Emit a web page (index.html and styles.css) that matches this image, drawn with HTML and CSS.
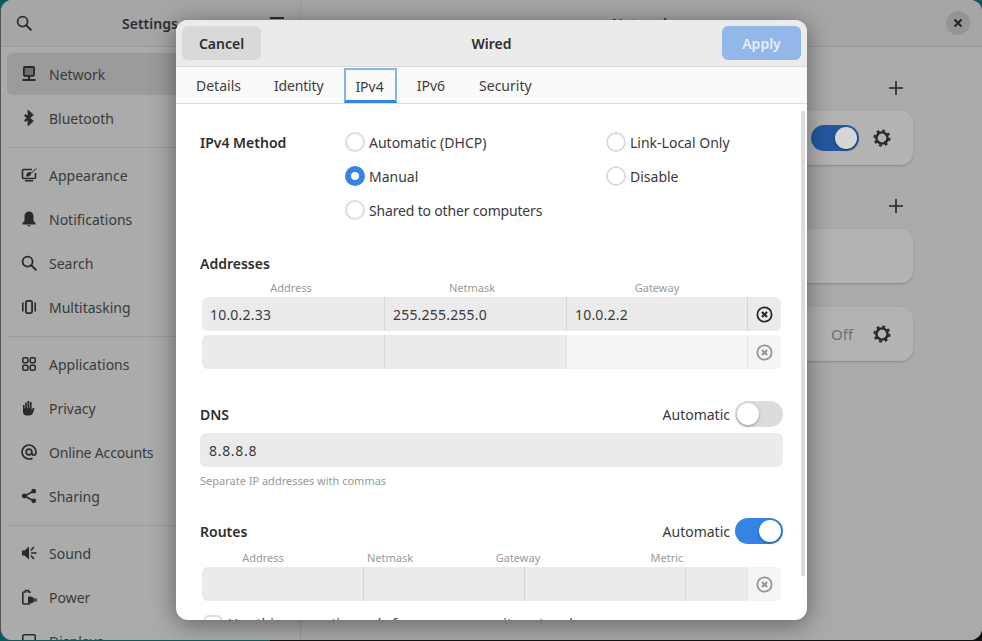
FILE: index.html
```html
<!DOCTYPE html>
<html lang="en">
<head>
    <meta charset="UTF-8">
    <meta name="viewport" content="width=device-width, initial-scale=1.0">
    <title>Settings - Network</title>
    <link rel="stylesheet" href="styles.css">
</head>
<body>
    <div class="window">
        <aside class="sidebar">
            <header class="side-head">
                <svg class="icon search-btn" viewBox="0 0 16 16"><circle cx="6.6" cy="6.6" r="5" fill="none" stroke="currentColor" stroke-width="1.8"/><path d="M10.4 10.4l4.4 4.4" stroke="currentColor" stroke-width="2" stroke-linecap="round"/></svg>
                <div class="side-title">Settings</div>
                <div class="burger"><span></span><span></span><span></span></div>
            </header>
            <nav class="side-nav">
                <a class="side-item selected">
                    <svg class="icon" viewBox="0 0 16 16"><rect x="2.900" y="1" width="10.200" height="8.800" rx="1" fill="#6e6e6e" stroke="currentColor" stroke-width="1.800"/><path d="M7 10h2v3H7zM1.500 13h13v2h-13z" fill="currentColor"/></svg>
                    Network
                </a>
                <a class="side-item">
                    <svg class="icon" viewBox="0 0 16 16"><path d="M3.800 4.800l7.200 6.300-3.200 3V1.900l3.200 3-7.200 6.300" fill="none" stroke="currentColor" stroke-width="2.400"/></svg>
                    Bluetooth
                </a>
                <div class="side-sep"></div>
                <a class="side-item">
                    <svg class="icon" viewBox="0 0 16 16"><path d="M11 2.500H2.500a1 1 0 0 0-1 1v7a1 1 0 0 0 1 1h11a1 1 0 0 0 1-1V6" fill="none" stroke="currentColor" stroke-width="1.600"/><path d="M15.500 1L10 5.500 8.500 5C6.500 5 5.500 6.500 5 9.500c2.500.3 5-.5 5-3l5.500-4.500zM4 13h8v1.600H4z" fill="currentColor"/></svg>
                    Appearance
                </a>
                <a class="side-item">
                    <svg class="icon" viewBox="0 0 16 16"><path d="M8 .5C5.200.5 3.500 2.800 3.500 5.500V9c0 1.500-1.200 2-2 3v1.500h13V12c-.8-1-2-1.500-2-3V5.500C12.500 2.800 10.800.5 8 .5zM6 14.200h4L8 15.800z" fill="currentColor"/></svg>
                    Notifications
                </a>
                <a class="side-item">
                    <svg class="icon" viewBox="0 0 16 16"><circle cx="6.600" cy="6.600" r="5" fill="none" stroke="currentColor" stroke-width="1.800"/><path d="M10.400 10.400l4.400 4.400" stroke="currentColor" stroke-width="2" stroke-linecap="round"/></svg>
                    Search
                </a>
                <a class="side-item">
                    <svg class="icon" viewBox="0 0 16 16"><rect x="4.900" y="1.900" width="6.200" height="12.200" rx="1.500" fill="none" stroke="currentColor" stroke-width="1.800"/><path d="M1 3.500h1.600v9H1zM13.400 3.500H15v9h-1.600z" fill="currentColor"/></svg>
                    Multitasking
                </a>
                <div class="side-sep"></div>
                <a class="side-item">
                    <svg class="icon" viewBox="0 0 16 16"><g fill="none" stroke="currentColor" stroke-width="1.600"><rect x="1.800" y="1.800" width="5" height="5" rx="1.200"/><rect x="9.200" y="1.800" width="5" height="5" rx="1.200"/><rect x="1.800" y="9.200" width="5" height="5" rx="1.200"/><rect x="9.200" y="9.200" width="5" height="5" rx="1.200"/></g></svg>
                    Applications
                </a>
                <a class="side-item">
                    <svg class="icon" viewBox="0 0 16 16"><path d="M2 5h1.600v3h.6V2.500h1.700V8h.6V1h1.800v7h.6V2h1.700v7.500l1.500-1.500c.7-.5 1.500 0 1.300.8L12 13c-.7 1.500-2 2.500-4 2.500H5.500C3.500 15.500 2 14 2 12z" fill="currentColor"/></svg>
                    Privacy
                </a>
                <a class="side-item tight">
                    <svg class="icon" viewBox="0 0 16 16"><path d="M11.500 14.200C10.500 14.800 9.300 15 8 15a7 7 0 1 1 7-7c0 2-1 3.200-2.300 3.200S10.800 10 10.800 8.500" fill="none" stroke="currentColor" stroke-width="1.700"/><circle cx="8" cy="8" r="2.800" fill="none" stroke="currentColor" stroke-width="1.700"/></svg>
                    Online Accounts
                </a>
                <a class="side-item">
                    <svg class="icon" viewBox="0 0 16 16"><path d="M12.500 3.200L3.500 8l9 4.800" fill="none" stroke="currentColor" stroke-width="1.700"/><circle cx="12.700" cy="3.200" r="2.400" fill="currentColor"/><circle cx="3.300" cy="8" r="2.400" fill="currentColor"/><circle cx="12.700" cy="12.800" r="2.400" fill="currentColor"/></svg>
                    Sharing
                </a>
                <div class="side-sep"></div>
                <a class="side-item">
                    <svg class="icon" viewBox="0 0 16 16"><path d="M1 5.500h2.500L8 1.500v13l-4.500-4H1z" fill="currentColor"/><path d="M10 8h5.500M9.800 5.500l3.200-3.500M9.800 10.500l3.200 3.500" stroke="currentColor" stroke-width="1.600"/></svg>
                    Sound
                </a>
                <a class="side-item">
                    <svg class="icon" viewBox="0 0 16 16"><path d="M9 4V3H7.500V1.500h-3V3H2.800a1 1 0 0 0-1 1v10a1 1 0 0 0 1 1h6" fill="none" stroke="currentColor" stroke-width="1.600"/><path d="M7 7.500h3a3 3 0 0 1 2.800 2H16v1.200h-3.200v.600H16v1.200h-3.200a3 3 0 0 1-2.800 2H7z" fill="currentColor"/></svg>
                    Power
                </a>
                <a class="side-item">
                    <svg class="icon" viewBox="0 0 16 16"><rect x="1.800" y="1.800" width="12.400" height="9.400" rx="1.500" fill="none" stroke="currentColor" stroke-width="1.600"/></svg>
                    Displays
                </a>
            </nav>
        </aside>

        <main class="main">
            <header class="main-head">
                <div class="main-title">Network</div>
                <button class="close-btn">
                    <svg viewBox="0 0 16 16" width="16" height="16"><path d="M4.500 4.500l7 7M11.500 4.500l-7 7" stroke="currentColor" stroke-width="2.200"/></svg>
                </button>
            </header>
            <div class="main-body">
                <div class="group-head">
                    <svg class="plus" viewBox="0 0 16 16"><path d="M8 1v14M1 8h14" stroke="currentColor" stroke-width="1.600"/></svg>
                </div>
                <div class="card">
                    <span class="switch dim-on"><span class="knob"></span></span>
                    <svg class="gear" viewBox="0 0 16 16"><circle cx="8" cy="8" r="5" fill="none" stroke="currentColor" stroke-width="2.200"/><circle cx="8" cy="8" r="6.700" fill="none" stroke="currentColor" stroke-width="1.800" stroke-dasharray="2.600 2.660"/></svg>
                </div>
                <div class="group-head second">
                    <svg class="plus" viewBox="0 0 16 16"><path d="M8 1v14M1 8h14" stroke="currentColor" stroke-width="1.600"/></svg>
                </div>
                <div class="card"></div>
                <div class="card third">
                    <span class="off-label">Off</span>
                    <svg class="gear" viewBox="0 0 16 16"><circle cx="8" cy="8" r="5" fill="none" stroke="currentColor" stroke-width="2.200"/><circle cx="8" cy="8" r="6.700" fill="none" stroke="currentColor" stroke-width="1.800" stroke-dasharray="2.600 2.660"/></svg>
                </div>
            </div>
        </main>

        <div class="dialog">
            <header class="dlg-head">
                <button class="btn cancel">Cancel</button>
                <div class="dlg-title">Wired</div>
                <button class="btn apply">Apply</button>
            </header>
            <ul class="tabs">
                <li>Details</li>
                <li class="tight identity">Identity</li>
                <li class="active">IPv4</li>
                <li>IPv6</li>
                <li>Security</li>
            </ul>
            <div class="dlg-body">
                <div class="method">
                    <div class="heading">IPv4 Method</div>
                    <div class="method-col">
                        <label class="radio"><span class="dot"></span>Automatic (DHCP)</label>
                        <label class="radio"><span class="dot checked"></span>Manual</label>
                        <label class="radio tight"><span class="dot"></span>Shared to other computers</label>
                    </div>
                    <div class="method-col">
                        <label class="radio"><span class="dot"></span>Link-Local Only</label>
                        <label class="radio"><span class="dot"></span>Disable</label>
                    </div>
                </div>

                <div class="heading addresses">Addresses</div>
                <div class="col-labels addr-labels">
                    <span>Address</span><span>Netmask</span><span>Gateway</span>
                </div>
                <div class="table-row addr-cols">
                    <div class="cell">10.0.2.33</div>
                    <div class="cell">255.255.255.0</div>
                    <div class="cell">10.0.2.2</div>
                    <div class="cell del">
                        <svg class="del-icon" viewBox="0 0 16 16"><circle cx="8" cy="8" r="6.700" fill="none" stroke="currentColor" stroke-width="1.700"/><path d="M5.600 5.600l4.800 4.800M10.400 5.600l-4.800 4.800" stroke="currentColor" stroke-width="2"/></svg>
                    </div>
                </div>
                <div class="table-row addr-cols second-row">
                    <div class="cell"></div>
                    <div class="cell"></div>
                    <div class="cell pale"></div>
                    <div class="cell del pale muted">
                        <svg class="del-icon" viewBox="0 0 16 16"><circle cx="8" cy="8" r="6.700" fill="none" stroke="currentColor" stroke-width="1.700"/><path d="M5.600 5.600l4.800 4.800M10.400 5.600l-4.800 4.800" stroke="currentColor" stroke-width="2"/></svg>
                    </div>
                </div>

                <div class="title-row dns">
                    <div class="heading">DNS</div>
                    <div class="auto">Automatic <span class="switch"><span class="knob"></span></span></div>
                </div>
                <div class="entry">8.8.8.8</div>
                <div class="hint">Separate IP addresses with commas</div>

                <div class="title-row routes">
                    <div class="heading">Routes</div>
                    <div class="auto">Automatic <span class="switch on"><span class="knob"></span></span></div>
                </div>
                <div class="col-labels route-labels">
                    <span>Address</span><span>Netmask</span><span>Gateway</span><span>Metric</span>
                </div>
                <div class="table-row route-cols">
                    <div class="cell"></div>
                    <div class="cell"></div>
                    <div class="cell"></div>
                    <div class="cell"></div>
                    <div class="cell del pale muted">
                        <svg class="del-icon" viewBox="0 0 16 16"><circle cx="8" cy="8" r="6.700" fill="none" stroke="currentColor" stroke-width="1.700"/><path d="M5.600 5.600l4.800 4.800M10.400 5.600l-4.800 4.800" stroke="currentColor" stroke-width="2"/></svg>
                    </div>
                </div>
                <label class="check"><span class="box"></span>Use this connection only for resources on its network</label>
            </div>
            <div class="scrollbar"></div>
        </div>
    </div>
</body>
</html>
```

FILE: styles.css
```css
body {
    font-family: "Noto Sans", sans-serif;
    font-size: 14px;
    margin: 0;
    height: 641px;
    overflow: hidden;
    background: linear-gradient(90deg, #0c5a5c 270px, #111 270px) bottom / 100% 50% no-repeat, #0c5a5c;
    color: #2e2e2e;
}
button {
    font: inherit;
    border: none;
}
.tight {
    letter-spacing: -0.17px;
}
.window {
    position: relative;
    display: flex;
    height: 640px;
    background: #aaa;
    border-radius: 12px;
    border-left: 1px solid #555;
    box-sizing: border-box;
    overflow: hidden;
}

/* sidebar */
.sidebar {
    width: 299px;
    flex: none;
    border-right: 1px solid #9b9b9b;
    background: #ababab;
}
.side-head {
    display: flex;
    align-items: center;
    height: 46px;
    border-bottom: 1px solid #9b9b9b;
    position: relative;
    background: #a6a6a6;
}
.search-btn {
    margin-left: 15px;
}
.side-title {
    position: absolute;
    left: 121px;
    font-weight: 600;
}
.burger {
    position: absolute;
    left: 269px;
    top: 17px;
    width: 14px;
}
.burger span {
    display: block;
    height: 2px;
    margin-bottom: 4px;
    background: #2e2e2e;
}
.side-nav {
    padding: 6px 0 0 6px;
    display: flex;
    flex-direction: column;
    gap: 2px;
}
.side-item {
    display: flex;
    align-items: center;
    gap: 12px;
    flex: none;
    height: 42px;
    padding-left: 14px;
    border-radius: 6px;
    color: #3a3a3a;
}
.side-item .icon {
    color: #2a2a2a;
}
.side-item.selected {
    background: #9b9b9b;
}
.side-sep {
    height: 1px;
    flex: none;
    background: #9b9b9b;
    margin: 6px 0 4px;
}
.icon {
    width: 16px;
    height: 16px;
    flex: none;
    color: #2e2e2e;
}

/* main panel */
.main {
    flex: 1;
    background: #aaa;
}
.main-head {
    position: relative;
    height: 46px;
    display: flex;
    align-items: center;
    justify-content: center;
    border-bottom: 1px solid #9b9b9b;
    background: #a6a6a6;
}
.main-title {
    font-weight: 600;
}
.close-btn {
    position: absolute;
    right: 12px;
    top: 11px;
    width: 24px;
    height: 24px;
    padding: 4px;
    border-radius: 50%;
    background: #959595;
    color: #2a2a2a;
}
.main-body {
    width: 544px;
    margin-left: 68px;
}
.group-head {
    display: flex;
    justify-content: flex-end;
    padding: 33px 9px 15px 0;
}
.plus {
    width: 16px;
    height: 16px;
    color: #262626;
}
.card {
    display: flex;
    align-items: center;
    justify-content: flex-end;
    height: 54px;
    padding-right: 22px;
    border-radius: 12px;
    background: #b3b3b3;
    box-shadow: 0 1px 2px rgba(0, 0, 0, 0.2);
}
.card.third {
    margin-top: 24px;
}
.gear {
    width: 18px;
    height: 18px;
    margin-left: 14px;
    color: #262626;
}
.off-label {
    color: #707070;
    font-size: 15px;
    margin-right: 6px;
}

/* switches */
.switch {
    display: inline-flex;
    align-items: center;
    box-sizing: border-box;
    width: 48px;
    height: 26px;
    padding: 2px;
    border-radius: 13px;
    background: #dcdcdc;
}
.switch .knob {
    width: 22px;
    height: 22px;
    border-radius: 50%;
    background: #fff;
    box-shadow: 0 1px 3px rgba(0, 0, 0, 0.35);
}
.switch.on {
    justify-content: flex-end;
    background: #3584e4;
}
.switch.dim-on {
    justify-content: flex-end;
    background: #22599f;
}
.switch.dim-on .knob {
    background: #d6d6d6;
}

/* dialog */
.dialog {
    position: absolute;
    left: 175px;
    top: 20px;
    width: 631px;
    height: 600px;
    border-radius: 12px;
    background: #fff;
    overflow: hidden;
    box-shadow: 0 4px 26px rgba(0, 0, 0, 0.45);
}
.dlg-head {
    display: flex;
    align-items: center;
    justify-content: space-between;
    height: 46px;
    padding: 0 6px;
    border-bottom: 1px solid #dcdcdc;
    background: #ebebeb;
}
.dlg-title {
    font-weight: 600;
}
.btn {
    width: 79px;
    height: 34px;
    border-radius: 6px;
    font-weight: 600;
}
.cancel {
    background: #d9d9d9;
    color: #2e2e2e;
}
.apply {
    background: #93b7e9;
    color: #e6eefa;
}
.tabs {
    display: flex;
    gap: 8px;
    list-style: none;
    margin: 0;
    height: 36px;
    padding: 0 0 0 8px;
    border-bottom: 1px solid #dcdcdc;
    background: #fafafa;
}
.tabs li {
    padding: 0 12px;
    line-height: 37px;
    color: #3d3d3d;
}
.tabs li.identity {
    margin-left: 1px;
}
.tabs li:last-child {
    margin-left: 2px;
}
.tabs li.active {
    margin: 1px 0 0 1px;
    height: 35px;
    line-height: 33px;
    box-sizing: border-box;
    border: 2px solid #85b3ee;
    border-bottom: 3px solid #3584e4;
    padding: 0 11px 0 9px;
}
.dlg-body {
    padding: 21px 24px 0;
    color: #3a3a3a;
}
.scrollbar {
    position: absolute;
    right: 2px;
    top: 91px;
    width: 4px;
    height: 465px;
    background: #dcdcdc;
}
.heading {
    font-weight: 600;
    line-height: 20px;
    color: #2e2e2e;
}
.method {
    display: grid;
    grid-template-columns: 145px 261px 1fr;
}
.method .heading {
    line-height: 36px;
}
.radio {
    display: flex;
    align-items: center;
    gap: 4px;
    height: 34px;
}
.dot {
    box-sizing: border-box;
    width: 20px;
    height: 20px;
    border-radius: 50%;
    border: 2px solid #dcdcdc;
    background: #fff;
}
.dot.checked {
    border: 6px solid #3584e4;
}
.addresses {
    margin-top: 27px;
}
.col-labels {
    display: grid;
    margin: 6px 0 1px 2px;
    font-size: 11px;
    line-height: 16px;
    text-align: center;
    color: #9a9a9a;
}
.addr-labels {
    grid-template-columns: 178px 184px 186px;
}
.route-labels {
    grid-template-columns: 122px 132px 124px 174px;
}
.table-row {
    display: grid;
    width: 579px;
    height: 34px;
    margin-left: 2px;
    border-radius: 6px;
    overflow: hidden;
    background: #ebebeb;
}
.second-row {
    margin-top: 4px;
}
.addr-cols {
    grid-template-columns: 182px 182px 181px 34px;
}
.route-cols {
    grid-template-columns: 161px 161px 161px 62px 34px;
}
.cell {
    display: flex;
    align-items: center;
    padding-left: 8px;
    box-sizing: border-box;
    border-left: 1px solid #d6d6d6;
    letter-spacing: 0.2px;
}
.cell:first-child {
    border-left: none;
}
.cell.pale {
    background: #f5f5f5;
    border-left-color: #e4e4e4;
}
.cell.del {
    justify-content: center;
    padding: 0 1px 0 0;
    color: #2a2a2a;
}
.cell.muted {
    color: #959595;
}
.del-icon {
    width: 17px;
    height: 17px;
}
.title-row {
    display: flex;
    align-items: center;
    justify-content: space-between;
    height: 26px;
}
.title-row .heading {
    padding-top: 2px;
}
.dns {
    margin-top: 32px;
}
.routes {
    margin-top: 29px;
}
.auto {
    display: flex;
    align-items: center;
    gap: 5px;
}
.entry {
    display: flex;
    align-items: center;
    height: 34px;
    margin-top: 6px;
    padding-left: 9px;
    border-radius: 6px;
    background: #ebebeb;
    letter-spacing: 0.7px;
}
.hint {
    margin-top: 6px;
    font-size: 11px;
    line-height: 16px;
    color: #999;
}
.check {
    display: flex;
    align-items: center;
    gap: 6px;
    margin: 13px 0 0 4px;
    white-space: nowrap;
}
.box {
    box-sizing: border-box;
    width: 18px;
    height: 18px;
    border: 2px solid #dcdcdc;
    border-radius: 5px;
}
```
